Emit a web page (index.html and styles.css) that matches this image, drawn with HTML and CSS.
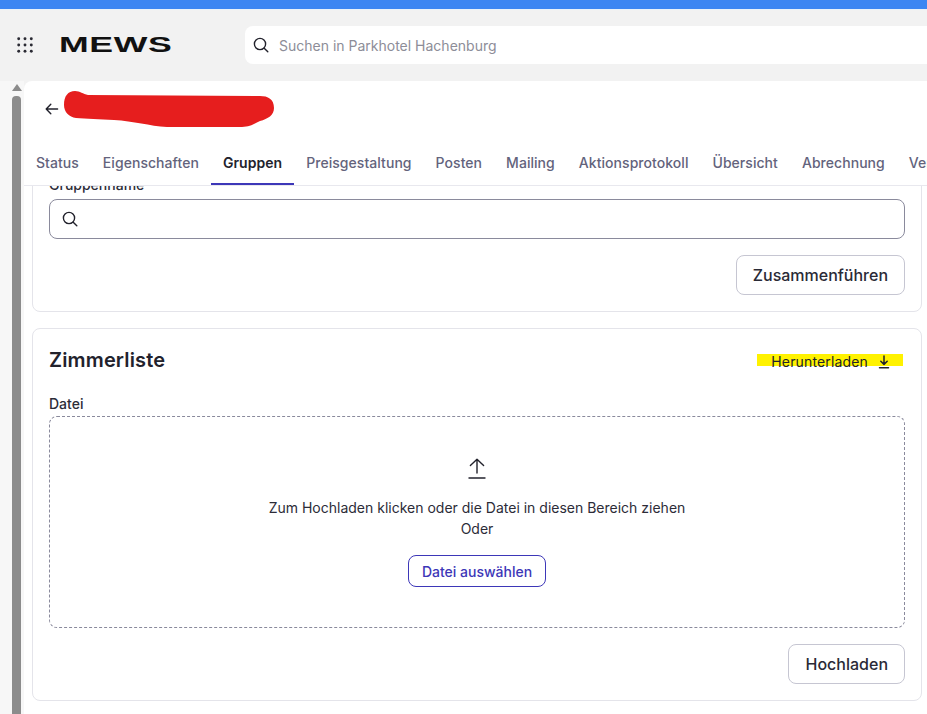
FILE: index.html
```html
<!DOCTYPE html>
<html lang="de">
<head>
    <meta charset="utf-8" />
    <title>Zimmerliste</title>
    <link rel="stylesheet" href="styles.css">
</head>
<body>
<div class="top_line"></div>
<header class="header">
    <a class="apps" href="javascript:;">
        <svg width="16" height="16" viewBox="0 0 16 16" fill="#2a2a33">
            <circle cx="1.7" cy="1.7" r="1.45"/><circle cx="8" cy="1.7" r="1.45"/><circle cx="14.3" cy="1.7" r="1.45"/>
            <circle cx="1.7" cy="8" r="1.45"/><circle cx="8" cy="8" r="1.45"/><circle cx="14.3" cy="8" r="1.45"/>
            <circle cx="1.7" cy="14.3" r="1.45"/><circle cx="8" cy="14.3" r="1.45"/><circle cx="14.3" cy="14.3" r="1.45"/>
        </svg>
    </a>
    <div class="logo"><span>MEWS</span></div>
    <div class="global_search">
        <svg class="search_icon" width="16" height="16" viewBox="0 0 16 16" fill="none" stroke="#22222c" stroke-width="1.4" stroke-linecap="round">
            <circle cx="7" cy="7" r="5.6"/><path d="M11.2 11.2L14.8 14.8"/>
        </svg>
        <span>Suchen in Parkhotel Hachenburg</span>
    </div>
</header>

<div class="main">
    <div class="scrollbar">
        <div class="scroll_arrow"></div>
        <div class="scroll_thumb"></div>
    </div>
    <div class="panel">
        <div class="panel_head">
            <div class="title_row">
                <a class="back" href="javascript:;">
                    <svg width="14" height="12" viewBox="0 0 14 12" fill="none" stroke="#22222c" stroke-width="1.4" stroke-linecap="round" stroke-linejoin="round">
                        <path d="M12.6 6H1.2M5.8 1.2L1.2 6l4.6 4.8"/>
                    </svg>
                </a>
                <svg class="scribble" width="212" height="38" viewBox="0 0 212 38">
                    <path fill="#e61e1e" d="M0 14C0 5 4 0 11 0c5 0 8 3 13 4l172 1c8 0 14 3 14 12 0 7-6 11-14 13-6 3-10 6-18 6h-75c-18-1-33-6-53-7-14-1-28-1-38-2C5 26 0 21 0 14z"/>
                </svg>
            </div>
            <nav class="tabs">
                <a href="javascript:;">Status</a>
                <a href="javascript:;">Eigenschaften</a>
                <a class="active" href="javascript:;">Gruppen</a>
                <a href="javascript:;">Preisgestaltung</a>
                <a href="javascript:;">Posten</a>
                <a href="javascript:;">Mailing</a>
                <a href="javascript:;">Aktionsprotokoll</a>
                <a href="javascript:;">Übersicht</a>
                <a href="javascript:;">Abrechnung</a>
                <a href="javascript:;">Verlauf</a>
            </nav>
        </div>
        <div class="content">
            <section class="card merge_card">
                <label class="field_label">Gruppenname</label>
                <div class="search_input">
                    <svg width="16" height="16" viewBox="0 0 16 16" fill="none" stroke="#22222c" stroke-width="1.4" stroke-linecap="round">
                        <circle cx="7" cy="7" r="5.6"/><path d="M11.2 11.2L14.8 14.8"/>
                    </svg>
                </div>
                <div class="card_actions">
                    <button class="btn merge_btn">Zusammenführen</button>
                </div>
            </section>

            <section class="card">
                <div class="card_head">
                    <h2>Zimmerliste</h2>
                    <a class="download" href="javascript:;">
                        <span class="marker"></span>
                        <span class="download_text">Herunterladen</span>
                        <svg width="12" height="14" viewBox="0 0 12 14" fill="none" stroke="#22222c" stroke-width="1.5" stroke-linecap="round" stroke-linejoin="round">
                            <path d="M6 1v8.4M2.8 6.2L6 9.4l3.2-3.2M1.5 12.8h9"/>
                        </svg>
                    </a>
                </div>
                <label class="field_label">Datei</label>
                <div class="dropzone">
                    <svg width="18" height="21" viewBox="0 0 18 21" fill="none" stroke="#22222c" stroke-width="1.4" stroke-linecap="round" stroke-linejoin="round">
                        <path d="M9 15V1.2M2.4 7.6L9 1.2l6.6 6.4M1 20h16"/>
                    </svg>
                    <p class="drop_text">Zum Hochladen klicken oder die Datei in diesen Bereich ziehen</p>
                    <p class="drop_text">Oder</p>
                    <button class="btn_pick">Datei auswählen</button>
                </div>
                <div class="card_actions">
                    <button class="btn upload_btn">Hochladen</button>
                </div>
            </section>
        </div>
    </div>
</div>
</body>
</html>
```

FILE: styles.css
```css
* {box-sizing: border-box;}
html, body {height: 100%;}
body {margin: 0;overflow: hidden;background: #f2f2f2;color: #22222c;font-family: Inter, "Liberation Sans", sans-serif;font-size: 14px;}
a {text-decoration: none;color: inherit;}
p {margin: 0;}

.top_line {height: 10px;background: #3b86f2;border-bottom: 1px solid #e8f2fa;}

.header {display: flex;align-items: center;height: 71px;padding: 0 0 1px 17px;}
.apps {display: flex;width: 16px;height: 16px;}
.logo {width: 112px;margin-left: 26px;margin-right: 74px;height: 18px;line-height: 18px;}
.logo span {display: inline-block;font-family: "Liberation Sans", sans-serif;font-weight: 700;font-size: 22px;letter-spacing: 0.4px;color: #111;transform: scaleX(1.62);transform-origin: left center;}
.global_search {flex: 1;display: flex;align-items: center;height: 38px;background: #fff;border-radius: 8px 0 0 8px;padding-left: 8px;color: #8d8d98;font-size: 14px;}
.search_icon {margin-right: 10px;}

.main {display: flex;height: 633px;}
.scrollbar {width: 24px;padding: 3px 3px 0 12px;display: flex;flex-direction: column;align-items: center;background: #f7f7f7;}
.scroll_arrow {width: 0;height: 0;border-left: 5px solid transparent;border-right: 5px solid transparent;border-bottom: 7px solid #8c8c8c;margin-bottom: 5px;}
.scroll_thumb {flex: 1;width: 9px;background: #8c8c8c;border-radius: 4px 4px 0 0;}

.panel {flex: 1;min-width: 0;background: #fff;border-radius: 8px 0 0 0;display: flex;flex-direction: column;overflow: hidden;}
.panel_head {height: 105px;border-bottom: 1px solid #e8e8ee;}
.title_row {display: flex;align-items: flex-start;height: 67px;padding: 10px 0 0 21px;}
.back {display: flex;margin-top: 12px;}
.scribble {margin-left: 5px;}
.tabs {display: flex;white-space: nowrap;}
.tabs a {display: block;height: 37px;padding: 5px 12px 0;font-weight: 500;font-size: 14px;line-height: 20px;letter-spacing: 0.05px;color: #63637c;}
.tabs a.active {font-weight: 600;color: #22222c;border-bottom: 2px solid #3d37b8;}

.content {flex: 1;min-height: 0;overflow: hidden;padding: 0 5px 0 8px;}
.card {border: 1px solid #e4e4ea;border-radius: 8px;padding: 15px 16px 16px;margin-bottom: 16px;}
.merge_card {margin-top: -27px;}
.field_label {display: block;height: 20px;font-size: 14px;line-height: 20px;font-weight: 500;color: #2c2c38;}
.search_input {display: flex;align-items: center;height: 40px;margin-top: 4px;padding-left: 12px;border: 1px solid #8a8a9c;border-radius: 8px;}
.card_actions {display: flex;justify-content: flex-end;margin-top: 16px;}
.btn {height: 40px;padding: 0 16px;background: #fff;border: 1px solid #c6c6d2;border-radius: 8px;font-family: inherit;font-size: 16px;font-weight: 500;color: #2a2a36;}
.upload_btn {padding-left: 17px;}

.card_head {display: flex;justify-content: space-between;align-items: center;height: 32px;margin-bottom: 18px;}
.card_head h2 {margin: 0;font-size: 20px;line-height: 32px;font-weight: 600;letter-spacing: 0.15px;color: #22222c;}
.download {position: relative;display: flex;align-items: center;gap: 10px;height: 20px;margin-top: 4px;padding-right: 15px;font-size: 14px;line-height: 20px;letter-spacing: 0.15px;}
.download_text, .download svg {position: relative;}
.marker {position: absolute;left: -14px;right: 2px;top: 2px;height: 12px;background: #fff200;}

.dropzone {display: flex;flex-direction: column;align-items: center;height: 212px;margin-top: 2px;padding-top: 41px;border: 1px dashed #8a8a9c;border-radius: 8px;}
.drop_text {font-size: 14px;line-height: 21px;color: #2c2c38;}
.dropzone svg {margin-bottom: 18px;}
.btn_pick {height: 32px;margin-top: 16px;padding: 0 12.5px;background: #fff;border: 1px solid #3d37b8;border-radius: 8px;font-family: inherit;font-size: 14px;font-weight: 500;color: #3d37b8;}
```
